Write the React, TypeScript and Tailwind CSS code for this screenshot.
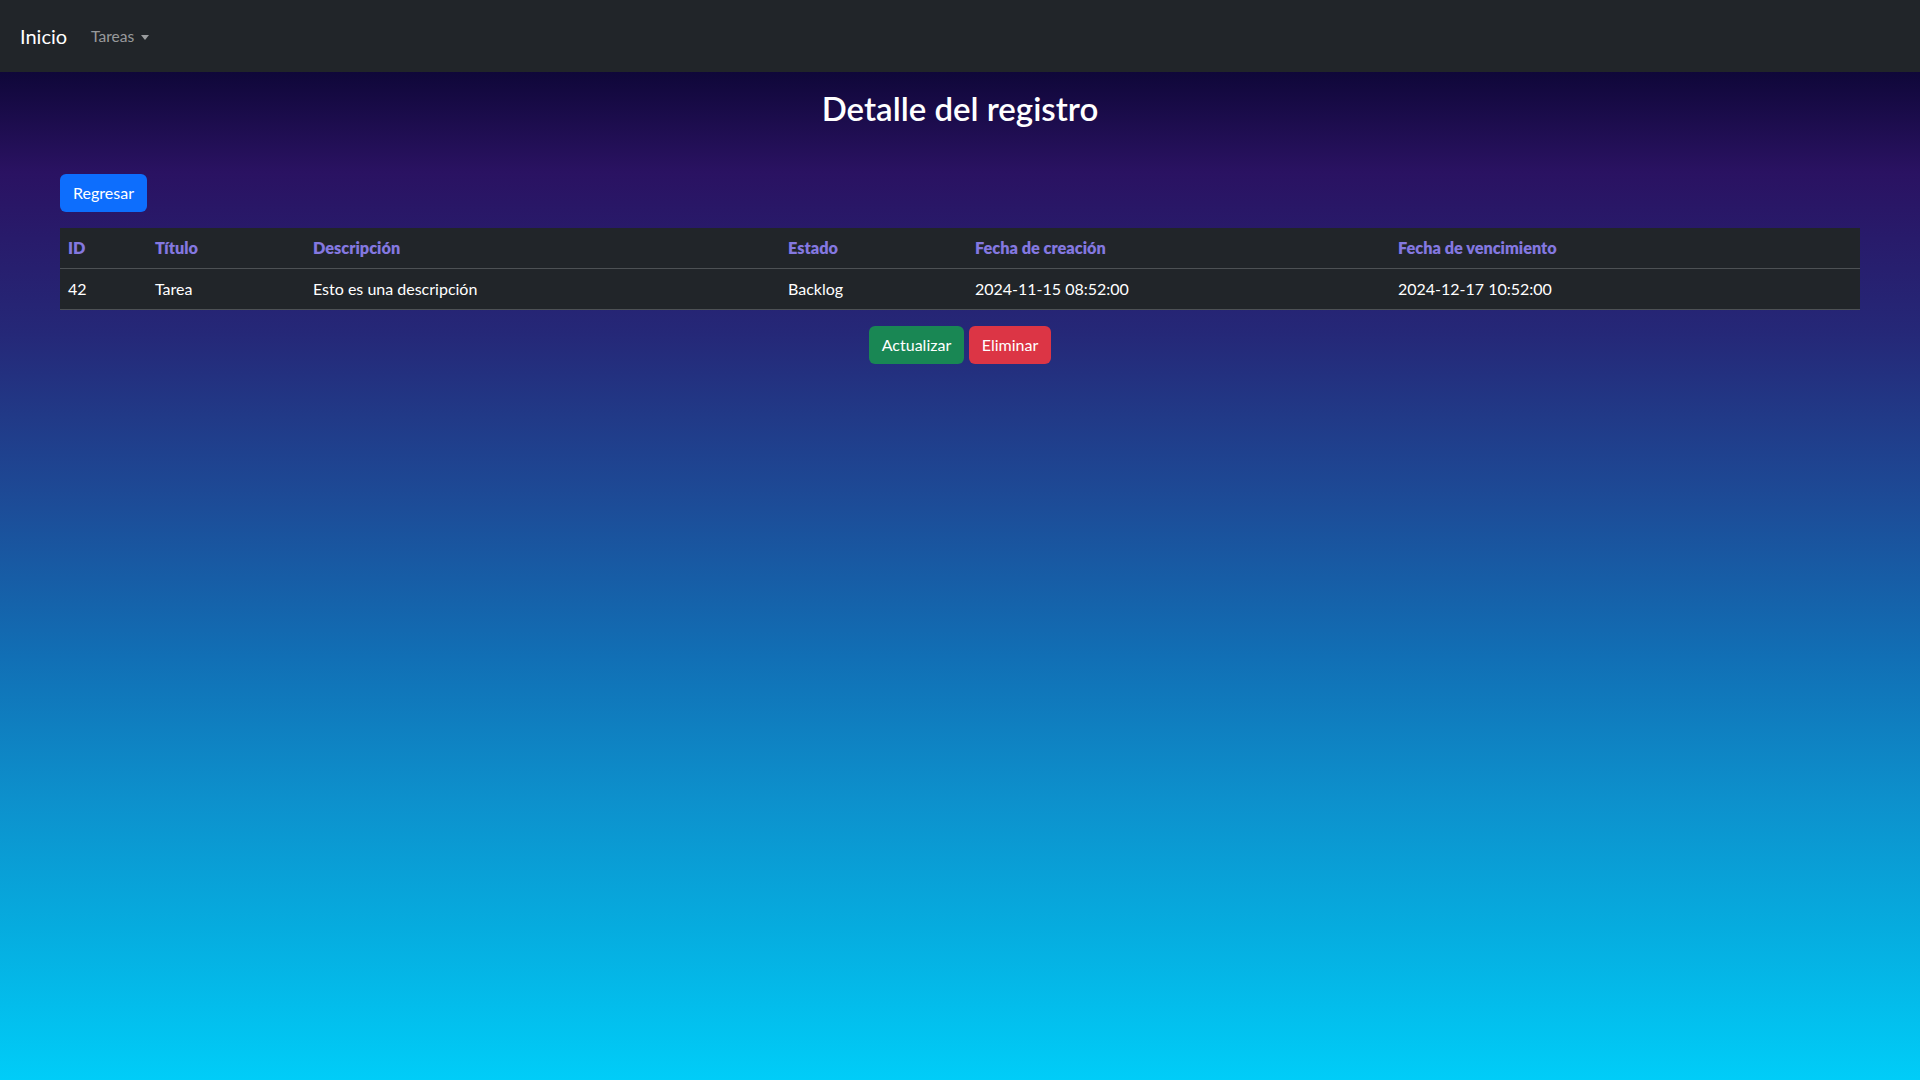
const columns = [
  { label: 'ID', width: 'w-[87px]' },
  { label: 'Título', width: 'w-[158px]' },
  { label: 'Descripción', width: 'w-[475px]' },
  { label: 'Estado', width: 'w-[187px]' },
  { label: 'Fecha de creación', width: 'w-[423px]' },
  { label: 'Fecha de vencimiento', width: 'w-[470px]' },
];

const registro = ['42', 'Tarea', 'Esto es una descripción', 'Backlog', '2024-11-15 08:52:00', '2024-12-17 10:52:00'];

function Navbar() {
  return (
    <nav className="h-[72px] bg-[#212529] flex items-center pl-5">
      <a className="text-[20px] text-white leading-[30px] mr-4">Inicio</a>
      <button className="flex items-center gap-[7px] px-2 pt-[2px] text-[15.5px] text-[rgba(255,255,255,0.55)]">
        Tareas
        <span className="w-0 h-0 border-l-[4px] border-r-[4px] border-t-[5px] border-l-transparent border-r-transparent border-t-[rgba(255,255,255,0.55)] mt-[1px]" />
      </button>
    </nav>
  );
}

export default function App() {
  return (
    <div className="min-h-screen flex flex-col font-['Lato','Segoe_UI',sans-serif]">
      <Navbar />
      <main className="flex-1 bg-[linear-gradient(180deg,#0f0739_0%,#2a1262_10%,#252878_26%,#1d4a96_42%,#116fb5_58%,#0d90cc_72%,#06acdf_85%,#00cdf8_100%)] px-[60px]">
        <h2 className="text-center text-white text-[33px] font-semibold pt-[16px] leading-[40px] mb-[46px]">Detalle del registro</h2>
        <button className="h-[38px] px-[12px] bg-[#0d6efd] text-white text-[16px] rounded-[6px] w-[87px]">Regresar</button>
        <table className="mt-4 w-full bg-[#212529] text-white text-[16px] border-collapse table-fixed">
          <thead>
            <tr className="border-b border-[#4d5154] h-[40px]">
              {columns.map((c) => (
                <th key={c.label} className={`${c.width} text-left font-extrabold text-[16.3px] px-2 text-[#8478e0]`}>{c.label}</th>
              ))}
            </tr>
          </thead>
          <tbody>
            <tr className="border-b border-[#4d5154] h-[41px]">
              {registro.map((v, i) => (
                <td key={i} className="px-2">{v}</td>
              ))}
            </tr>
          </tbody>
        </table>
        <div className="flex justify-center gap-[5px] mt-4">
          <button className="h-[38px] w-[95px] bg-[#198754] text-white text-[16px] rounded-[6px]">Actualizar</button>
          <button className="h-[38px] w-[82px] bg-[#dc3545] text-white text-[16px] rounded-[6px]">Eliminar</button>
        </div>
      </main>
    </div>
  );
}
